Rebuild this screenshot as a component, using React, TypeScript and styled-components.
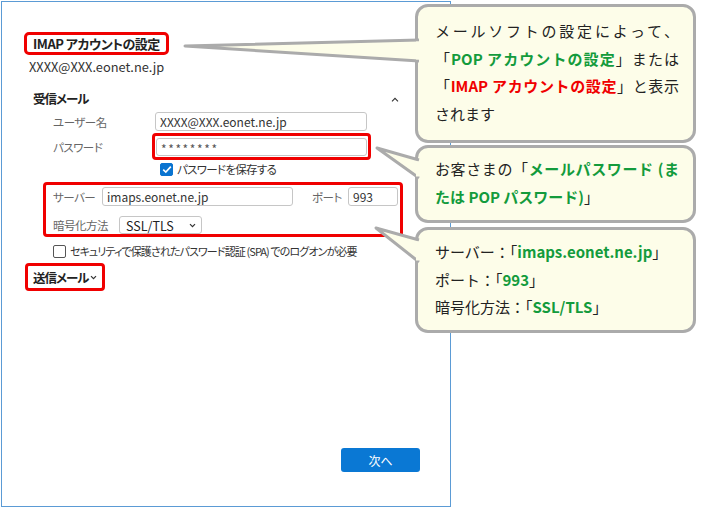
import React from 'react'
import styled, { createGlobalStyle } from 'styled-components'

const GlobalStyle = createGlobalStyle`
  html, body { margin: 0; padding: 0; background: #fff; }
  body { font-family: "Noto Sans CJK JP", "Noto Sans", sans-serif; color: #222; }
  * { box-sizing: border-box; }
`

const RED = '#f00000'
const GREEN = '#139b3c'
const CREAM = '#fdfde9'
const GREY_LINE = '#ababab'

const Stage = styled.div`
  position: relative;
  width: 701px;
  height: 507px;
  overflow: hidden;
  background: #fff;
`

const Dialog = styled.div`
  margin: 1px 0 0 1px;
  width: 450px;
  height: 506px;
  border: 1px solid #5b9bd5;
  display: flex;
  flex-direction: column;
  align-items: flex-start;
  font-feature-settings: "palt";
`

const TitleBox = styled.div`
  margin: 30px 0 0 22px;
  border: 3px solid ${RED};
  border-radius: 5px;
  padding: 0 6px;
  font-size: 13px;
  font-weight: 700;
  line-height: 17px;
  letter-spacing: -0.5px;
  color: #222;
  white-space: nowrap;
`

const Email = styled.div`
  margin: 4px 0 0 27px;
  font-size: 12.8px;
  line-height: 16px;
  color: #333;
`

const SectionHead = styled.div`
  margin: 16px 0 0 31px;
  width: 366px;
  display: flex;
  justify-content: space-between;
  align-items: center;
  font-size: 12.5px;
  font-weight: 700;
  line-height: 16px;
  letter-spacing: -1px;
`

const Fields = styled.div`
  margin-left: 41px;
  width: 360px;
  display: flex;
  flex-direction: column;
`

const Row = styled.div<{ $top: number; $indent: number }>`
  display: flex;
  align-items: center;
  margin-top: ${(p) => p.$top}px;
  padding-left: ${(p) => p.$indent}px;
`

const Label = styled.span<{ $w: number }>`
  width: ${(p) => p.$w}px;
  flex: none;
  font-size: 11.5px;
  letter-spacing: -0.5px;
  line-height: 14px;
  color: #666;
  white-space: nowrap;
`

const Input = styled.div<{ $w: number; $h?: number }>`
  width: ${(p) => p.$w}px;
  height: ${(p) => p.$h ?? 19}px;
  flex: none;
  border: 1px solid #c6c6c6;
  border-radius: 3px;
  background: #fff;
  padding: 0 4px;
  display: flex;
  align-items: center;
  font-size: 12px;
  color: #333;
`

const Masked = styled.span`
  letter-spacing: 1.6px;
  color: #555;
  font-size: 12px;
  padding-top: 3px;
`

const Highlight = styled.div`
  border: 3px solid ${RED};
  border-radius: 4px;
  padding: 2px 1px 1px;
`

const Group = styled.div`
  margin-top: 6px;
  border: 3px solid ${RED};
  border-radius: 4px;
  padding: 2px 2px 0 7px;
`

const Select = styled(Input)`
  justify-content: space-between;
  padding: 0 5px 0 6px;
  font-size: 12.5px;
  color: #222;
`

const Box = styled.span<{ $on?: boolean }>`
  width: 13px;
  height: 13px;
  flex: none;
  border-radius: 2px;
  border: 1px solid ${(p) => (p.$on ? '#0a74d0' : '#555')};
  background: ${(p) => (p.$on ? '#0a74d0' : '#fff')};
  display: flex;
  align-items: center;
  justify-content: center;
`

const CheckText = styled.span<{ $size: number; $spacing: number }>`
  margin-left: 4px;
  font-size: ${(p) => p.$size}px;
  letter-spacing: ${(p) => p.$spacing}px;
  line-height: 13px;
  color: #333;
  white-space: nowrap;
`

const SendBox = styled.div`
  margin: 5px 0 0 23px;
  border: 3px solid ${RED};
  border-radius: 4px;
  height: 28px;
  padding: 0 5px;
  display: flex;
  align-items: center;
  gap: 2px;
  font-size: 12.5px;
  font-weight: 700;
  letter-spacing: -1px;
  white-space: nowrap;
`

const NextButton = styled.button`
  margin: auto 30px 34px auto;
  width: 79px;
  height: 24px;
  border: none;
  border-radius: 3px;
  background: #0a78d4;
  color: #fff;
  font-family: inherit;
  font-size: 12px;
  padding: 0;
`

const Bubble = styled.div<{ $top: number; $h: number; $pad: number }>`
  position: absolute;
  left: 415px;
  top: ${(p) => p.$top}px;
  width: 281px;
  height: ${(p) => p.$h}px;
  border: 3px solid ${GREY_LINE};
  border-radius: 13px;
  background: ${CREAM};
  padding: ${(p) => p.$pad}px 14px 0 17px;
  font-size: 15px;
  line-height: 27.5px;
  color: #222;
`

const Tail = styled.svg`
  position: absolute;
  left: -3px;
  top: -3px;
  overflow: visible;
`

const Line = styled.div<{ $justify?: boolean }>`
  text-align: ${(p) => (p.$justify ? 'justify' : 'left')};
  text-align-last: ${(p) => (p.$justify ? 'justify' : 'auto')};
`

const Em = styled.b<{ $c: string }>`
  color: ${(p) => p.$c};
  font-weight: 700;
`

const ChevronUp = () => (
  <svg width="8" height="5" viewBox="0 0 8 5">
    <path d="M1 4.3 L4 1.3 L7 4.3" fill="none" stroke="#333" strokeWidth="1.1" />
  </svg>
)

const ChevronDown = ({ c = '#333' }: { c?: string }) => (
  <svg width="7" height="5" viewBox="0 0 7 5">
    <path d="M1 1.2 L3.5 3.7 L6 1.2" fill="none" stroke={c} strokeWidth="1.2" />
  </svg>
)

const Check = () => (
  <svg width="10" height="9" viewBox="0 0 10 9">
    <path d="M1.2 4.6 L3.8 7.1 L8.8 1.6" fill="none" stroke="#fff" strokeWidth="1.6" />
  </svg>
)

type TailProps = { tip: [number, number]; base: [number, number] }

const Callout = ({ top, h, pad, tail, children }: { top: number; h: number; pad: number; tail: TailProps; children: React.ReactNode }) => (
  <Bubble $top={top} $h={h} $pad={pad}>
    <Tail width="1" height="1">
      <path
        d={`M4 ${tail.base[0]} L${tail.tip[0]} ${tail.tip[1]} L4 ${tail.base[1]}`}
        fill={CREAM}
        stroke={GREY_LINE}
        strokeWidth="3"
        strokeLinejoin="round"
      />
      <rect x="1" y={tail.base[0] + 1.5} width="4" height={tail.base[1] - tail.base[0] - 3} fill={CREAM} />
    </Tail>
    {children}
  </Bubble>
)

export default function App() {
  return (
    <Stage>
      <GlobalStyle />
      <Dialog>
        <TitleBox>IMAP アカウントの設定</TitleBox>
        <Email>XXXX@XXX.eonet.ne.jp</Email>
        <SectionHead>
          <span>受信メール</span>
          <ChevronUp />
        </SectionHead>
        <Fields>
          <Row $top={5} $indent={10}>
            <Label $w={102}>ユーザー名</Label>
            <Input $w={212}>XXXX@XXX.eonet.ne.jp</Input>
          </Row>
          <Row $top={2} $indent={10}>
            <Label $w={99}>パスワード</Label>
            <Highlight>
              <Input $w={211} $h={18}>
                <Masked>********</Masked>
              </Input>
            </Highlight>
          </Row>
          <Row $top={3} $indent={117}>
            <Box $on>
              <Check />
            </Box>
            <CheckText $size={11.5} $spacing={-0.7}>パスワードを保存する</CheckText>
          </Row>
          <Group>
            <Row $top={0} $indent={0}>
              <Label $w={49}>サーバー</Label>
              <Input $w={191}>imaps.eonet.ne.jp</Input>
              <Label $w={36} style={{ marginLeft: 19 }}>ポート</Label>
              <Input $w={50}>993</Input>
            </Row>
            <Row $top={10} $indent={0}>
              <Label $w={66}>暗号化方法</Label>
              <Select $w={83} $h={18}>
                <span>SSL/TLS</span>
                <ChevronDown />
              </Select>
            </Row>
          </Group>
          <Row $top={8} $indent={10}>
            <Box />
            <CheckText $size={11} $spacing={-0.9}>セキュリティで保護されたパスワード認証 (SPA) でのログオンが必要</CheckText>
          </Row>
        </Fields>
        <SendBox>
          <span>送信メール</span>
          <ChevronDown />
        </SendBox>
        <NextButton>次へ</NextButton>
      </Dialog>

      <Callout top={4} h={139} pad={10} tail={{ tip: [-230, 42], base: [36, 57] }}>
        <Line $justify>メールソフトの設定によって、</Line>
        <Line $justify>
          「<Em $c={GREEN}>POP アカウントの設定</Em>」または
        </Line>
        <Line $justify>
          「<Em $c={RED}>IMAP アカウントの設定</Em>」と表示
        </Line>
        <Line>されます</Line>
      </Callout>

      <Callout top={145} h={78} pad={7} tail={{ tip: [-38, 3], base: [15, 33] }}>
        <Line $justify>
          お客さまの「<Em $c={GREEN}>メールパスワード (ま</Em>
        </Line>
        <Line>
          <Em $c={GREEN}>たは POP パスワード)</Em>」
        </Line>
      </Callout>

      <Callout top={227} h={106} pad={8} tail={{ tip: [-39, 1], base: [13, 35] }}>
        <Line>
          サーバー：「<Em $c={GREEN}>imaps.eonet.ne.jp</Em>」
        </Line>
        <Line>
          ポート：「<Em $c={GREEN}>993</Em>」
        </Line>
        <Line>
          暗号化方法：「<Em $c={GREEN}>SSL/TLS</Em>」
        </Line>
      </Callout>
    </Stage>
  )
}
